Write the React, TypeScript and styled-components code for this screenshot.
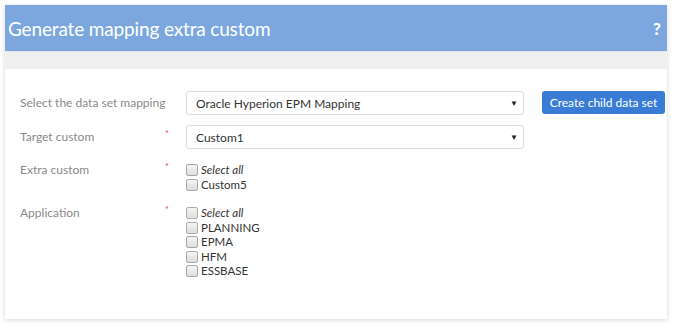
import React from "react";
import styled, { createGlobalStyle } from "styled-components";

const Global = createGlobalStyle`
  html, body { margin: 0; padding: 0; background: #ffffff; }
  body { font-family: Lato, "Open Sans", sans-serif; }
`;

const Page = styled.div`
  padding: 5px 9px 9px 5px;
`;

const Panel = styled.div`
  width: 662px;
  height: 314px;
  background: #ffffff;
  box-shadow: 0 1px 5px rgba(0, 0, 0, 0.16);
  display: flex;
  flex-direction: column;
`;

const Header = styled.div`
  height: 47px;
  background: #7ba7de;
  display: flex;
  align-items: center;
  justify-content: space-between;
  padding: 0 6px 0 3px;
  border-bottom: 1px solid #dde3ea;
  box-sizing: border-box;
`;

const Title = styled.h1`
  margin: 0;
  font-family: Lato, sans-serif;
  font-weight: 400;
  font-size: 19px;
  color: #ffffff;
  letter-spacing: -0.15px;
`;

const Help = styled.span`
  font-family: Lato, sans-serif;
  font-weight: 900;
  font-size: 17px;
  color: #ffffff;
`;

const Strip = styled.div`
  height: 17px;
  background: #f0f0f0;
`;

const Body = styled.div`
  flex: 1;
  padding: 22px 0 0 15px;
  display: flex;
  flex-direction: column;
`;

const Row = styled.div<{ $mt?: number }>`
  display: grid;
  grid-template-columns: 145px 21px 338px 18px 123px;
  align-items: start;
  margin-top: ${(p) => p.$mt ?? 0}px;
`;

const Label = styled.div<{ $h: number }>`
  font-size: 12px;
  color: #8a8a8a;
  line-height: ${(p) => p.$h}px;
  white-space: nowrap;
`;

const Star = styled.div<{ $h: number }>`
  color: #e8443c;
  font-size: 9px;
  line-height: ${(p) => p.$h}px;
  transform: translateY(-3px);
`;

const SelectBox = styled.div`
  height: 24px;
  box-sizing: border-box;
  border: 1px solid #dcdcdc;
  border-radius: 3px;
  display: flex;
  align-items: center;
  justify-content: space-between;
  padding: 0 5px 0 9px;
  font-size: 12px;
  color: #333333;
`;

const Arrow = styled.span`
  font-size: 8px;
  color: #222;
`;

const Button = styled.button`
  height: 23px;
  border: none;
  border-radius: 3px;
  background: #3a7bd5;
  color: #ffffff;
  font-family: Lato, sans-serif;
  font-size: 12px;
  padding: 0;
  cursor: pointer;
`;

const CheckList = styled.div`
  display: flex;
  flex-direction: column;
`;

const CheckItem = styled.label<{ $italic?: boolean }>`
  display: flex;
  align-items: center;
  gap: 3px;
  font-size: 11.5px;
  line-height: 14.5px;
  height: 14.5px;
  color: #333333;
  font-style: ${(p) => (p.$italic ? "italic" : "normal")};
`;

const Box = styled.span`
  width: 10px;
  height: 10px;
  border: 1px solid #a9a9a9;
  border-radius: 2px;
  background: linear-gradient(#f4f4f4, #dedede);
  flex: none;
`;

const Check = ({ text, italic }: { text: string; italic?: boolean }) => (
  <CheckItem $italic={italic}>
    <Box />
    {text}
  </CheckItem>
);

export default function App() {
  return (
    <>
      <Global />
      <Page>
        <Panel>
          <Header>
            <Title>Generate mapping extra custom</Title>
            <Help>?</Help>
          </Header>
          <Strip />
          <Body>
            <Row>
              <Label $h={24}>Select the data set mapping</Label>
              <div />
              <SelectBox>
                Oracle Hyperion EPM Mapping
                <Arrow>▼</Arrow>
              </SelectBox>
              <div />
              <Button>Create child data set</Button>
            </Row>
            <Row $mt={10}>
              <Label $h={24}>Target custom</Label>
              <Star $h={24}>*</Star>
              <SelectBox>
                Custom1
                <Arrow>▼</Arrow>
              </SelectBox>
            </Row>
            <Row $mt={14}>
              <Label $h={14.5}>Extra custom</Label>
              <Star $h={14.5}>*</Star>
              <CheckList>
                <Check text="Select all" italic />
                <Check text="Custom5" />
              </CheckList>
            </Row>
            <Row $mt={14}>
              <Label $h={14.5}>Application</Label>
              <Star $h={14.5}>*</Star>
              <CheckList>
                <Check text="Select all" italic />
                <Check text="PLANNING" />
                <Check text="EPMA" />
                <Check text="HFM" />
                <Check text="ESSBASE" />
              </CheckList>
            </Row>
          </Body>
        </Panel>
      </Page>
    </>
  );
}
